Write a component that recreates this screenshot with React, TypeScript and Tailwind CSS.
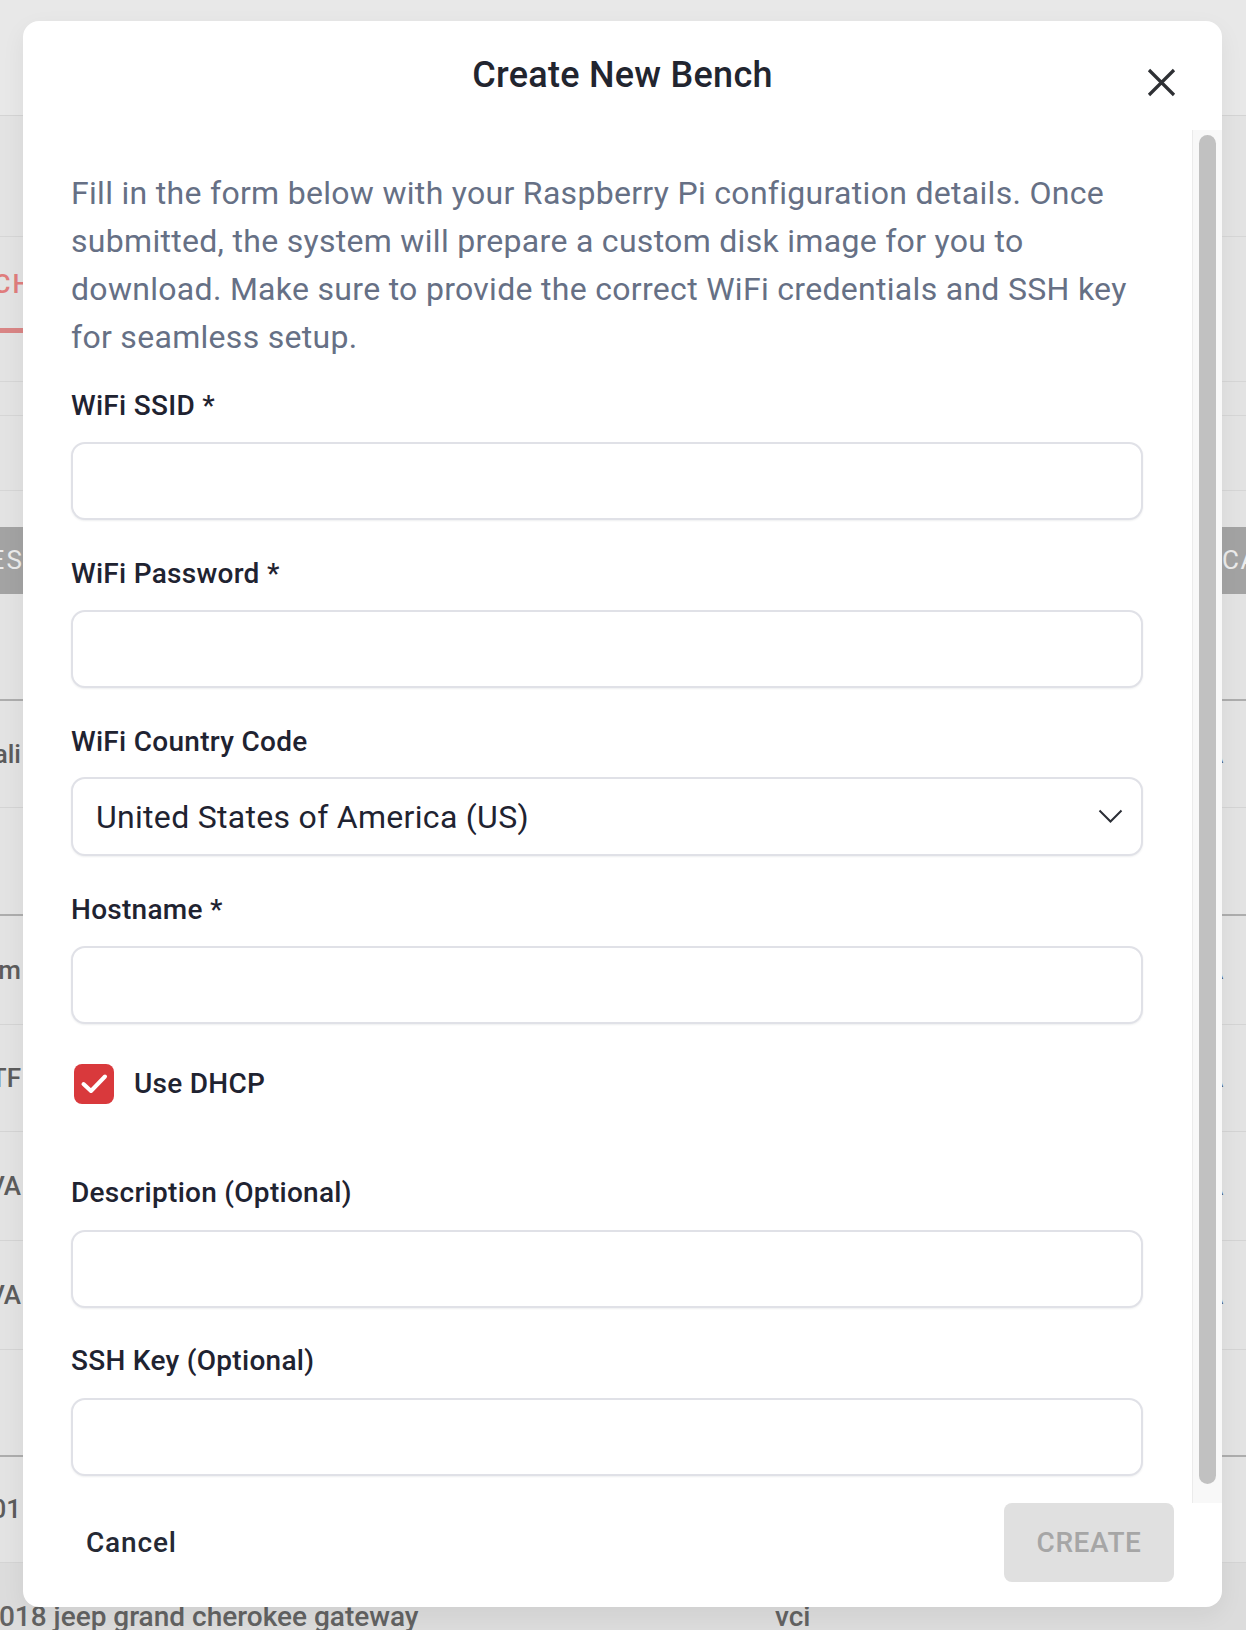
import React from "react";

function LeftFrag({ text, className }: { text: string; className: string }) {
  return (
    <div className="w-[23px] overflow-hidden shrink-0">
      <div className="flex justify-end w-[21px]">
        <span className={"whitespace-nowrap " + className}>{text}</span>
      </div>
    </div>
  );
}

function RightFrag() {
  return (
    <div className="ml-auto w-[40px] shrink-0 overflow-hidden">
      <span className="whitespace-nowrap text-[26px] font-medium text-[#555]">A</span>
    </div>
  );
}

function Background() {
  const frag = "text-[26px] font-medium text-[#5c5c5c]";
  return (
    <div className="flex flex-col w-[1246px]">
      <div className="h-[116px] border-b border-[#d4d4d4] bg-[#e8e8e8]" />
      <div className="h-[121px] border-b border-[#d6d6d6]" />
      <div className="h-[145px] border-b border-[#d6d6d6] pt-[32px]">
        <div className="w-[23px] overflow-hidden h-[30px]">
          <div className="flex justify-end w-[33px]">
            <span className="whitespace-nowrap text-[26px] leading-[30px] font-medium tracking-[0.08em] text-[#e07d7d]">BENCH</span>
          </div>
        </div>
        <div className="mt-[29px] h-[5px] w-[40px] bg-[#d98585]" />
      </div>
      <div className="h-[34px] border-b border-[#d6d6d6]" />
      <div className="h-[75px] border-b border-[#d6d6d6]" />
      <div className="h-[36px]" />
      <div className="h-[67px] bg-[#a3a3a3] flex items-center justify-between">
        <div className="w-[23px] overflow-hidden">
          <div className="flex justify-end w-[24px]">
            <span className="whitespace-nowrap text-[26px] tracking-[0.08em] text-[#ececec]">TES</span>
          </div>
        </div>
        <div className="w-[24px] overflow-hidden">
          <span className="whitespace-nowrap text-[26px] tracking-[0.06em] text-[#ececec]">CA</span>
        </div>
      </div>
      <div className="h-[107px] border-b-2 border-[#adadad]" />
      <div className="h-[107px] border-b border-[#d4d4d4] flex items-center">
        <LeftFrag text="Tali" className={frag} />
        <RightFrag />
      </div>
      <div className="h-[108px] border-b-2 border-[#adadad]" />
      <div className="h-[109px] border-b border-[#d4d4d4] flex items-center">
        <LeftFrag text="Tom" className={frag} />
        <RightFrag />
      </div>
      <div className="h-[107px] border-b border-[#d4d4d4] flex items-center">
        <LeftFrag text="UTF" className={frag} />
        <RightFrag />
      </div>
      <div className="h-[109px] border-b border-[#d4d4d4] flex items-center">
        <LeftFrag text="VA" className={frag} />
        <RightFrag />
      </div>
      <div className="h-[109px] border-b border-[#d4d4d4] flex items-center">
        <LeftFrag text="VA" className={frag} />
        <RightFrag />
      </div>
      <div className="h-[107px] border-b-2 border-[#adadad]" />
      <div className="h-[106px] border-b border-[#d4d4d4] flex items-center">
        <LeftFrag text="001" className={frag} />
      </div>
      <div className="h-[67px] bg-[#dcdcdc] flex pt-[38px]">
        <div className="ml-[-17px] w-[792px] shrink-0 text-[28px] leading-[32px] font-medium text-[#626262] whitespace-nowrap">
          2018 jeep grand cherokee gateway
        </div>
        <div className="text-[28px] leading-[32px] font-medium text-[#626262]">vci</div>
      </div>
    </div>
  );
}

function Label({ children, low }: { children: React.ReactNode; low?: boolean }) {
  return (
    <div
      className={
        low
          ? "h-[36px] leading-[40px] text-[28px] font-medium tracking-[0.01em] text-[#1f2331]"
          : "h-[36px] leading-[36px] text-[28px] font-medium tracking-[0.01em] text-[#1f2331]"
      }
    >
      {children}
    </div>
  );
}

function TextInput() {
  return (
    <div className="mt-[20px] h-[78px] rounded-[14px] border-2 border-[#e0e1e7] bg-white shadow-[0_1px_2px_rgba(16,24,40,0.07)]" />
  );
}

export default function App() {
  return (
    <div className="relative w-[1246px] h-[1630px] overflow-hidden bg-[#e3e3e3] font-['Roboto','Noto_Sans',sans-serif]">
      <Background />

      <div className="absolute left-[23px] top-[21px] w-[1199px] h-[1586px] bg-white rounded-[16px] flex flex-col overflow-hidden shadow-[0_8px_24px_rgba(0,0,0,0.06)]">
        {/* header */}
        <div className="relative h-[109px] shrink-0 flex justify-center pt-[33px]">
          <h2 className="h-[42px] leading-[42px] text-[36px] font-medium text-[#22252f] tracking-[0.0075em]">
            Create New Bench
          </h2>
          <button className="absolute right-[46px] top-[47px] w-[29px] h-[29px] flex items-center justify-center">
            <svg width="29" height="29" viewBox="0 0 29 29" fill="none">
              <path d="M2 2 L27 27 M27 2 L2 27" stroke="#2e3034" strokeWidth="3.2" strokeLinecap="butt" />
            </svg>
          </button>
        </div>

        {/* body */}
        <div className="flex h-[1373px] shrink-0">
          <div className="flex-1 overflow-hidden pl-[48px] pr-[49px] pt-[39px]">
            <p className="text-[32px] leading-[48px] tracking-[0.00938em] text-[#667085]">
              Fill in the form below with your Raspberry Pi configuration details. Once submitted, the system will
              prepare a custom disk image for you to download. Make sure to provide the correct WiFi credentials and
              SSH key for seamless setup.
            </p>

            <div className="mt-[25px]">
              <Label low>WiFi SSID *</Label>
              <TextInput />
            </div>

            <div className="mt-[34px]">
              <Label low>WiFi Password *</Label>
              <TextInput />
            </div>

            <div className="mt-[34px]">
              <Label low>WiFi Country Code</Label>
              <div className="mt-[19px] h-[79px] rounded-[14px] border-2 border-[#e0e1e7] bg-white shadow-[0_1px_2px_rgba(16,24,40,0.07)] flex items-center justify-between pl-[23px] pr-[18px]">
                <span className="text-[32px] tracking-[0.00938em] text-[#1f2331]">United States of America (US)</span>
                <svg width="25" height="15" viewBox="0 0 25 15" fill="none">
                  <path d="M1.5 1.5 L12.5 12.5 L23.5 1.5" stroke="#2b2e36" strokeWidth="2" />
                </svg>
              </div>
            </div>

            <div className="mt-[34px]">
              <Label low>Hostname *</Label>
              <TextInput />
            </div>

            <div className="mt-[39px] flex items-center gap-[20px] pl-[3px]">
              <div className="w-[40px] h-[40px] rounded-[8px] bg-[#d9393c] flex items-center justify-center">
                <svg width="40" height="40" viewBox="0 0 40 40" fill="none">
                  <path d="M9.5 20 L17 27 L31 12.5" stroke="white" strokeWidth="4" strokeLinecap="round" strokeLinejoin="round" />
                </svg>
              </div>
              <span className="text-[28px] font-medium tracking-[0.01em] text-[#1f2331]">Use DHCP</span>
            </div>

            <div className="mt-[70px]">
              <Label>Description (Optional)</Label>
              <div className="mt-[19px] h-[78px] rounded-[14px] border-2 border-[#e0e1e7] bg-white shadow-[0_1px_2px_rgba(16,24,40,0.07)]" />
            </div>

            <div className="mt-[35px]">
              <Label>SSH Key (Optional)</Label>
              <div className="mt-[19px] h-[78px] rounded-[14px] border-2 border-[#e0e1e7] bg-white shadow-[0_1px_2px_rgba(16,24,40,0.07)]" />
            </div>
          </div>

          {/* scrollbar */}
          <div className="w-[30px] shrink-0 bg-[#f8f8f8] border-l border-[#ebebeb] pt-[5px] pl-[6px]">
            <div className="w-[17px] h-[1349px] rounded-full bg-[#c1c1c1]" />
          </div>
        </div>

        {/* footer */}
        <div className="h-[104px] shrink-0 flex items-center justify-between pl-[47px] pr-[48px] pb-[25px]">
          <button className="px-[16px] h-[60px] text-[28px] font-medium tracking-[0.03em] text-[#252934]">Cancel</button>
          <button className="w-[170px] h-[79px] rounded-[8px] bg-[#e0e0e0] text-[28px] font-medium tracking-[0.02em] text-[#a6a6a6]">
            CREATE
          </button>
        </div>
      </div>
    </div>
  );
}
